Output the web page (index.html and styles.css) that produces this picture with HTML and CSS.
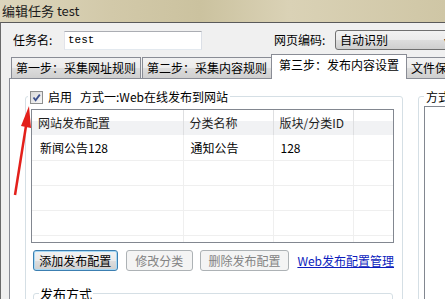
FILE: index.html
```html
<!DOCTYPE html>
<html lang="zh-CN">
<head>
    <meta charset="UTF-8">
    <title>编辑任务 test</title>
    <link rel="stylesheet" href="styles.css">
</head>
<body>
    <div class="titlebar">编辑任务 test</div>

    <div class="window">
        <div class="form-row">
            <label class="lbl name-lbl" for="task-name">任务名:</label>
            <input class="text-box" id="task-name" value="test">
            <label class="lbl enc-lbl">网页编码:</label>
            <div class="combo">自动识别<span class="combo-arrow">▾</span></div>
        </div>

        <div class="tabs">
            <div class="tab">第一步：采集网址规则</div>
            <div class="tab">第二步：采集内容规则</div>
            <div class="tab active">第三步：发布内容设置</div>
            <div class="tab">文件保存及部分高级设置</div>
        </div>

        <div class="panel">
            <fieldset class="group main-group">
                <legend>
                    <span class="check">
                        <svg viewBox="0 0 11 11" width="11" height="11">
                            <path d="M2.5 5.5 L4.6 8.2 L8.8 2.6" fill="none" stroke="#3b4f8c" stroke-width="1.8"/>
                        </svg>
                    </span><span class="enable">启用</span><span class="mode">方式一:Web在线发布到网站</span>
                </legend>

                <div class="list">
                    <table class="grid">
                        <colgroup>
                            <col class="c1"><col class="c2"><col class="c3"><col class="c4">
                        </colgroup>
                        <thead>
                            <tr><th>网站发布配置</th><th>分类名称</th><th>版块/分类ID</th><th></th></tr>
                        </thead>
                        <tbody>
                            <tr><td>新闻公告128</td><td>通知公告</td><td>128</td><td></td></tr>
                            <tr><td></td><td></td><td></td><td></td></tr>
                            <tr><td></td><td></td><td></td><td></td></tr>
                            <tr><td></td><td></td><td></td><td></td></tr>
                            <tr><td></td><td></td><td></td><td></td></tr>
                        </tbody>
                    </table>
                </div>

                <div class="buttons">
                    <button class="btn btn-add">添加发布配置</button>
                    <button class="btn btn-edit" disabled>修改分类</button>
                    <button class="btn btn-del" disabled>删除发布配置</button>
                    <a class="manage-link" href="#">Web发布配置管理</a>
                </div>

                <fieldset class="group sub-group">
                    <legend>发布方式</legend>
                </fieldset>
            </fieldset>

            <fieldset class="group side-group">
                <legend>方式二:发布到数据库</legend>
                <div class="side-box"></div>
            </fieldset>
        </div>
    </div>

    <!-- 红色标注箭头 -->
    <svg class="mark" width="445" height="299" viewBox="0 0 445 299">
        <line x1="15" y1="195" x2="26" y2="126" stroke="#e3201b" stroke-width="2.5"/>
        <polygon points="29,106 31,128 21,126" fill="#e3201b"/>
    </svg>
</body>
</html>
```

FILE: styles.css
```css
* {
    margin: 0;
    padding: 0;
    box-sizing: border-box;
}

body {
    position: relative;
    width: 445px;
    height: 299px;
    overflow: hidden;
    font-family: "Noto Sans CJK SC", sans-serif;
    font-size: 12px;
    color: #000;
    background-color: #f0f0f0;
}

.titlebar {
    height: 22px;
    padding: 2px 0 0 2px;
    font-size: 13px;
    line-height: 17px;
    color: #1b1b1b;
    background: linear-gradient(to right, #ddd6bd 0%, #d2c9a9 25%, #cbc29f 45%, #dad2b6 65%, #cfc6a5 100%);
}

.window {
    height: 277px;
    padding: 7px 0 0 8px;
    border-top: 1px solid #5a5a5a;
    border-left: 1px solid #6a6a6a;
    background-color: #f0f0f0;
}

/* 任务名 / 网页编码 */
.form-row {
    display: flex;
    align-items: center;
    height: 20px;
}

.form-row > * {
    flex-shrink: 0;
}

.lbl {
    line-height: 20px;
    white-space: nowrap;
}

.name-lbl {
    width: 51px;
    margin-left: 4px;
}

.text-box {
    width: 138px;
    height: 19px;
    padding: 0 3px;
    border: 1px solid;
    border-color: #abadb3 #dbdfe6 #e3e9ef #e2e3ea;
    font-family: "Liberation Mono", monospace;
    font-size: 11px;
    outline: none;
}

.enc-lbl {
    width: 61px;
    margin-left: 72px;
}

.combo {
    position: relative;
    width: 122px;
    height: 20px;
    padding-left: 4px;
    line-height: 18px;
    border: 1px solid #707070;
    border-radius: 3px;
    background: linear-gradient(#f2f2f2 0%, #ebebeb 50%, #dddddd 51%, #cfcfcf 100%);
}

.combo-arrow {
    position: absolute;
    right: 6px;
    top: 0;
    color: #333;
}

/* 选项卡 */
.tabs {
    display: flex;
    align-items: flex-end;
    height: 24px;
    margin-top: 4px;
    padding-left: 2px;
    white-space: nowrap;
}

.tab {
    height: 21px;
    margin-right: 1px;
    padding: 0 4px;
    line-height: 20px;
    border: 1px solid #898c95;
    border-bottom: none;
    background: linear-gradient(#f2f2f2 0%, #ebebeb 50%, #dddddd 51%, #cfcfcf 100%);
}

.tab.active {
    position: relative;
    z-index: 1;
    height: 25px;
    margin: 0 -1px -1px -2px;
    padding: 0 7px;
    line-height: 20px;
    background: #fff;
}

.panel {
    display: flex;
    gap: 15px;
    width: 560px;
    height: 240px;
    padding: 10px 0 0 15px;
    border: 1px solid #898c95;
    background-color: #fff;
}

/* 分组框 */
.group {
    min-width: 0;
    border: 1px solid #d5dfe5;
    border-radius: 3px;
}

.group legend {
    line-height: 15px;
    white-space: nowrap;
}

.main-group {
    flex-shrink: 0;
    width: 378px;
    height: 240px;
    padding: 5px 8px 0 5px;
}

.main-group > legend {
    margin-left: -3px;
    padding: 0 2px;
}

.check {
    display: inline-block;
    width: 13px;
    height: 13px;
    padding: 0;
    vertical-align: -2px;
    border: 1px solid #8e8f8f;
    background: linear-gradient(135deg, #d8d8d8, #f8f8f8);
}

.check svg {
    display: block;
}

.enable {
    margin-left: 5px;
}

.mode {
    margin-left: 8px;
}

/* 列表 */
.list {
    width: 363px;
    height: 134px;
    overflow: hidden;
    border: 1px solid #828790;
    background-color: #fff;
}

.grid {
    width: 361px;
    table-layout: fixed;
    border-collapse: collapse;
}

.c1 { width: 151px; }
.c2 { width: 90px; }
.c3 { width: 80px; }
.c4 { width: 40px; }

.grid th {
    height: 25px;
    padding-left: 6px;
    font-weight: normal;
    text-align: left;
    color: #1e1e1e;
    border-right: 1px solid #dedfe1;
    background: linear-gradient(#ffffff 0%, #ffffff 45%, #f1f2f4 46%, #f1f2f4 100%);
}

.grid td {
    height: 25px;
    padding-left: 7px;
    border-right: 1px solid #efefef;
    border-bottom: 1px solid #efefef;
}

.grid td:first-child {
    padding-left: 8px;
}

/* 按钮 */
.buttons {
    display: flex;
    align-items: center;
    height: 21px;
    margin: 7px 0 0 2px;
}

.btn {
    height: 21px;
    margin-right: 8px;
    font-family: inherit;
    font-size: 12px;
    color: #000;
    border: 1px solid #707070;
    border-radius: 3px;
    background: linear-gradient(#f2f2f2 0%, #ebebeb 50%, #dddddd 51%, #cfcfcf 100%);
}

.btn-add {
    width: 86px;
    border-color: #3c7fb1;
    box-shadow: inset 0 0 0 1px #a7d9f5;
}

.btn-edit {
    width: 68px;
    margin-right: 7px;
}

.btn-del {
    width: 91px;
}

.btn:disabled {
    color: #838383;
    border-color: #adb2b5;
    background: #f4f4f4;
}

.manage-link {
    color: #0c1cbd;
    text-decoration: underline;
    white-space: nowrap;
}

.sub-group {
    height: 40px;
    margin: 15px 1px 0 2px;
    padding: 0 5px;
}

.sub-group legend {
    padding: 0 1px;
    font-size: 13px;
}

/* 右侧分组 */
.side-group {
    flex-shrink: 0;
    width: 200px;
    height: 240px;
    padding: 2px 0 0 5px;
}

.side-group legend {
    padding: 0 2px;
}

.side-box {
    height: 200px;
    border: 1px solid #828790;
    background-color: #fff;
}

.mark {
    position: absolute;
    left: 0;
    top: 0;
    pointer-events: none;
}
```
